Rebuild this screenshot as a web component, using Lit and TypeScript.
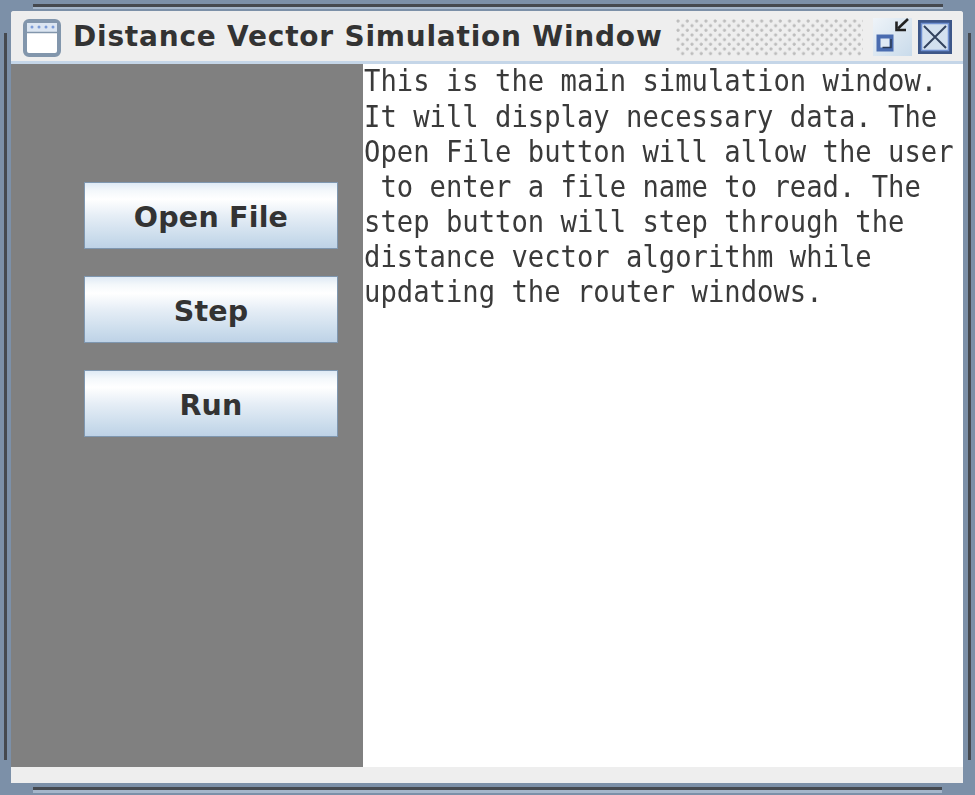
import { LitElement, html, css } from "lit";
import { customElement } from "lit/decorators.js";

const LINES = [
  "This is the main simulation window.",
  "It will display necessary data. The",
  "Open File button will allow the user",
  " to enter a file name to read. The",
  "step button will step through the",
  "distance vector algorithm while",
  "updating the router windows.",
];

@customElement("app-root")
export class AppRoot extends LitElement {
  static styles = css`
    :host { display: block; width: 975px; height: 795px; overflow: hidden; }
    .frame {
      position: relative; box-sizing: border-box; width: 975px; height: 795px;
      padding: 11px 12px 12px 11px; background: #7c90a8;
    }
    .groove { position: absolute; background: #45494f; filter: blur(0.7px); }
    .groove.top { left: 33px; right: 32px; top: 4px; height: 3px; }
    .groove.bottom { left: 33px; right: 33px; top: 787px; height: 3px; }
    .groove.left { left: 4px; top: 33px; bottom: 35px; width: 3px; }
    .groove.right { right: 4px; top: 33px; bottom: 35px; width: 3px; }
    .hl { position: absolute; background: #a5b6ca; filter: blur(0.7px); }
    .hl.top { left: 33px; right: 32px; top: 7px; height: 2px; }
    .hl.bottom { left: 33px; right: 33px; top: 790px; height: 3px; }
    .window {
      display: flex; flex-direction: column; height: 100%;
      background: #eeeeee; border-radius: 3px 3px 0 0; overflow: hidden;
      filter: blur(0.5px);
    }
    .titlebar {
      flex: none; box-sizing: border-box; height: 53px; display: flex; align-items: center;
      padding: 3px 11px 0 12px; background: #eeeeee; border-bottom: 3px solid #c5d6e8;
    }
    .app-icon { flex: none; width: 38px; height: 38px; margin-right: 12px; }
    .title {
      flex: none; font: bold 28px/34px "DejaVu Sans", sans-serif; color: #333333;
      white-space: pre; width: 591px; letter-spacing: 0.78px; margin-top: -2px;
    }
    .dots {
      flex: none; width: 187px; height: 37px; margin-left: 12px; margin-right: 10px;
      background-color: #eeeeee;
      background-image:
        radial-gradient(circle at 2px 2px, #bcbcbc 1.2px, transparent 1.9px),
        radial-gradient(circle at 2px 2px, #bcbcbc 1.2px, transparent 1.9px);
      background-size: 9.3px 9.3px;
      background-position: 0 0, 4.65px 4.65px;
    }
    .ctl { flex: none; display: block; }
    .min { margin-top: -2px; }
    .close { margin-left: 6px; margin-top: -2px; }
    .content { flex: 1; display: flex; min-height: 0; }
    .side {
      flex: none; box-sizing: border-box; width: 352px; padding: 118px 25px 0 73px;
      background: #808080; display: flex; flex-direction: column; gap: 27px;
    }
    .btn {
      box-sizing: border-box; height: 67px; width: 100%;
      display: flex; align-items: center; justify-content: center;
      border: 1px solid #7f97b0;
      font: bold 28.5px/34px "DejaVu Sans", sans-serif; color: #333333; letter-spacing: 0.2px;
      background: linear-gradient(#dfeaf5 0%, #f4f8fb 12%, #ffffff 25%, #e6eef6 50%, #c9dbeb 85%, #bed2e6 100%);
    }
    .btn span { margin-top: 4px; }
    .text {
      flex: 1; min-width: 0; background: #ffffff; padding-left: 1px; overflow: hidden;
    }
    .mono {
      margin-top: -0.6px; width: 660px; transform: scaleX(0.9067); transform-origin: left top;
      font: 30px/35.15px "DejaVu Sans Mono", monospace; color: #3a3a3a; white-space: pre;
    }
    .status { flex: none; height: 16px; background: #eeeeee; }
  `;

  render() {
    return html`
      <div class="frame">
        <div class="groove top"></div><div class="hl top"></div>
        <div class="groove bottom"></div><div class="hl bottom"></div>
        <div class="groove left"></div>
        <div class="groove right"></div>
        <div class="window">
          <div class="titlebar">
            <svg class="app-icon" viewBox="0 0 38 38">
              <rect x="2" y="2" width="34" height="34" rx="4" fill="#ffffff" stroke="#8296ac" stroke-width="4"/>
              <rect x="4" y="4" width="30" height="9" fill="#dce6f2"/>
              <path d="M4 13.5H34" stroke="#8296ac" stroke-width="1.5"/>
              <g fill="#7c9cd8"><circle cx="9" cy="8" r="1.5"/><circle cx="16" cy="8" r="1.5"/><circle cx="23" cy="8" r="1.5"/><circle cx="30" cy="8" r="1.5"/></g>
            </svg>
            <div class="title">Distance Vector Simulation Window</div>
            <div class="dots"></div>
            <svg class="ctl min" width="39" height="38" viewBox="0 0 39 38">
              <defs><linearGradient id="g" x1="0" y1="0" x2="1" y2="1">
                <stop offset="0" stop-color="#eef3f8"/><stop offset="1" stop-color="#c9dbeb"/>
              </linearGradient></defs>
              <rect width="39" height="38" fill="url(#g)"/>
              <rect x="5.5" y="18.5" width="13" height="13" fill="#dfe9f4" stroke="#4a6cb0" stroke-width="4"/>
              <path d="M9.5 29.5H18V21" fill="none" stroke="#2b3a55" stroke-width="1.5"/>
              <path d="M35 1L25 10.5" stroke="#222" stroke-width="2.6"/>
              <path d="M23.5 3.5V12H33" fill="none" stroke="#222" stroke-width="2.6"/>
            </svg>
            <svg class="ctl close" width="34" height="34" viewBox="0 0 34 34">
              <rect x="1.5" y="1.5" width="31" height="31" fill="#d3e1ef" stroke="#3d5688" stroke-width="3"/>
              <rect x="3.5" y="3.5" width="27" height="27" fill="none" stroke="#6e8fd0" stroke-width="1.5"/>
              <path d="M6 6L28 28M28 6L6 28" stroke="#33435e" stroke-width="2"/>
            </svg>
          </div>
          <div class="content">
            <div class="side">
              <div class="btn"><span>Open File</span></div>
              <div class="btn"><span>Step</span></div>
              <div class="btn"><span>Run</span></div>
            </div>
            <div class="text"><div class="mono">${LINES.join("\n")}</div></div>
          </div>
          <div class="status"></div>
        </div>
      </div>
    `;
  }
}
